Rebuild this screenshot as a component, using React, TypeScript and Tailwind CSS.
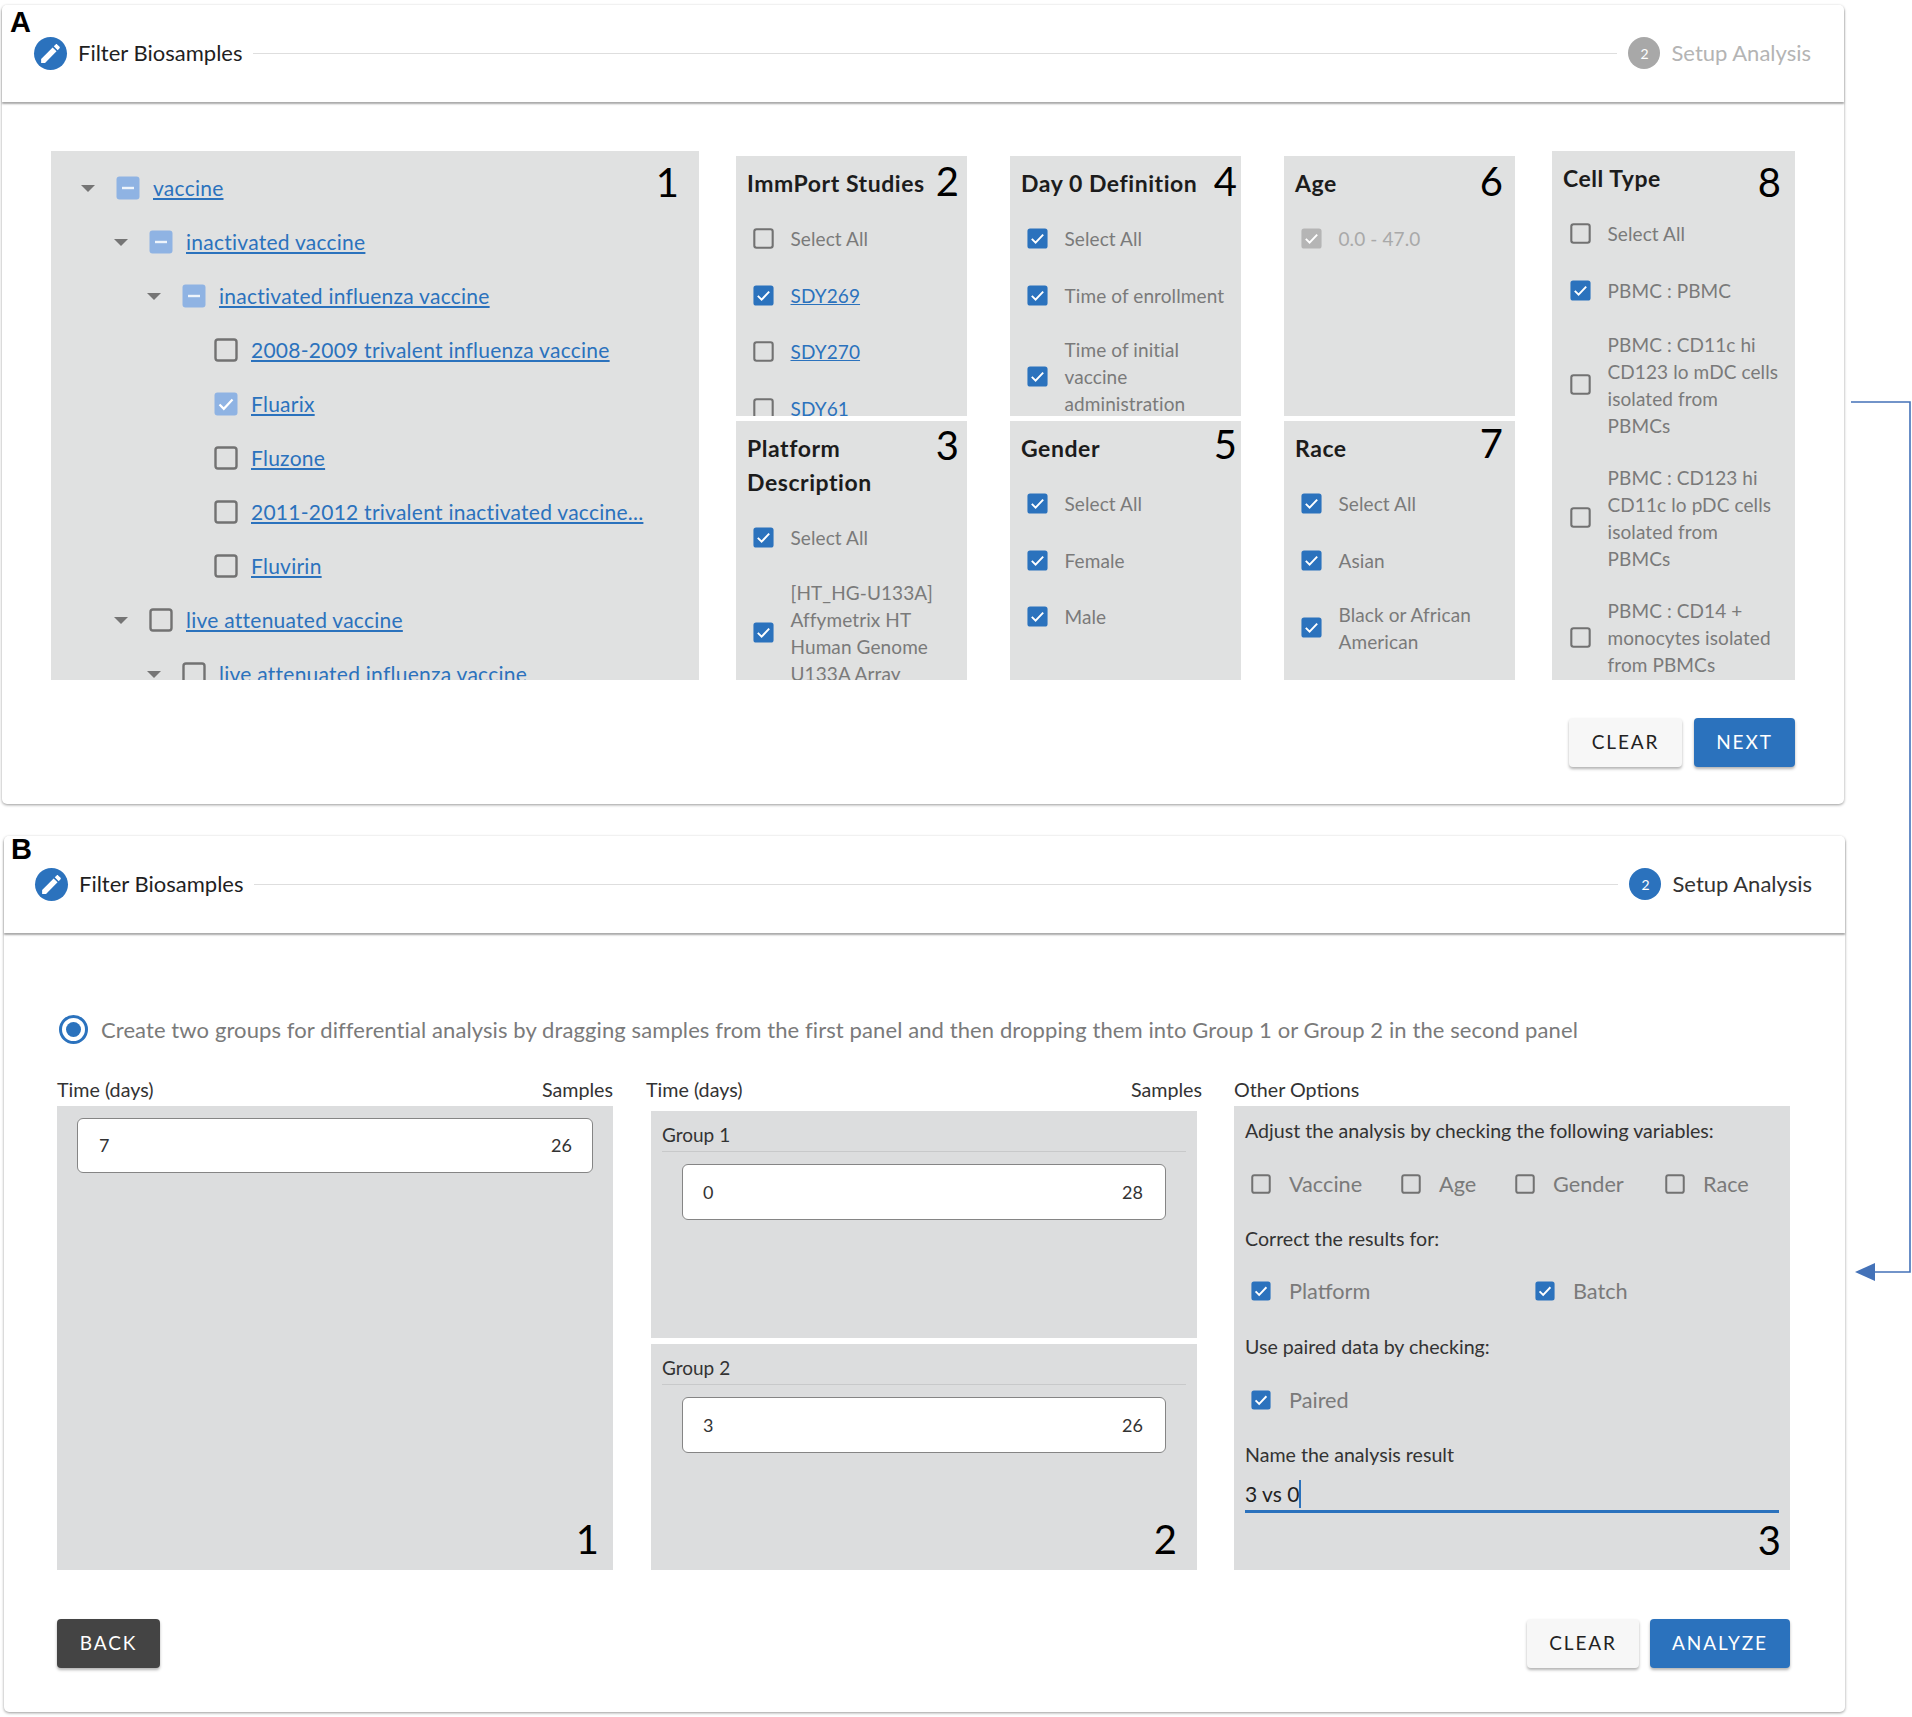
import React from "react";

const BLUE = "#2b72bd";

function Box({ state, size }: { state: "on" | "off" | "mixed" | "soft" | "disabled"; size: number }) {
  const fill = state === "on" ? BLUE : state === "mixed" || state === "soft" ? "#8fb3e3" : state === "disabled" ? "#b5b5b5" : "none";
  return (
    <svg width={size} height={size} viewBox="0 0 24 24" className="shrink-0">
      {state === "off" ? (
        <rect x="1.5" y="1.5" width="21" height="21" rx="2.5" fill="none" stroke="#727272" strokeWidth="2.4" />
      ) : (
        <rect x="0.5" y="0.5" width="23" height="23" rx="3" fill={fill} />
      )}
      {state === "mixed" && <rect x="6" y="10.8" width="12" height="2.4" fill="#fff" opacity="0.85" />}
      {(state === "on" || state === "soft" || state === "disabled") && (
        <path d="M5.5 12.5l4.3 4.3 8.7-9.3" fill="none" stroke="#fff" strokeWidth="2.2" />
      )}
    </svg>
  );
}

function Caret() {
  return (
    <svg width="14" height="7" viewBox="0 0 14 7" className="shrink-0 mr-[21px]">
      <polygon points="0,0 14,0 7,7" fill="#757575" />
    </svg>
  );
}

function Tree({ pad, label, state, arrow = true }: { pad: string; label: string; state: "off" | "mixed" | "soft"; arrow?: boolean }) {
  return (
    <div className={`flex h-[54px] shrink-0 items-center ${pad}`}>
      {arrow && <Caret />}
      <Box state={state} size={24} />
      <a className="ml-[13px] whitespace-nowrap text-[21px] tracking-[0.25px] text-[#2b72bd] underline">{label}</a>
    </div>
  );
}

function Item({ state, label, link, pad = "pl-[17px]", gray }: { state: "on" | "off" | "disabled"; label: string; link?: boolean; pad?: string; gray?: boolean }) {
  return (
    <div className={`flex min-h-[56.7px] shrink-0 items-center py-[12.5px] ${pad}`}>
      <Box state={state} size={21} />
      <span
        className={`ml-[16.5px] whitespace-pre-line text-[19px] leading-[27px] tracking-[0.1px] ${
          link ? "text-[#2b72bd] underline" : gray ? "text-[#a9a9a9]" : "text-[#7a7a7a]"
        }`}
      >
        {label}
      </span>
    </div>
  );
}

function Digit({ children, className }: { children: React.ReactNode; className: string }) {
  return <span className={`absolute text-[40px] leading-[48px] text-black ${className}`}>{children}</span>;
}

function Panel({ title, digit, digitClass, height, children }: { title: string; digit: string; digitClass: string; height: string; children: React.ReactNode }) {
  return (
    <div className={`relative overflow-hidden bg-[#e0e1e1] ${height}`}>
      <div className="whitespace-pre-line pb-[9.75px] pl-[11px] pt-[9.75px] text-[23px] font-bold leading-[34.5px] tracking-[0.55px] text-[#1c1c1c]">{title}</div>
      {children}
      <Digit className={digitClass}>{digit}</Digit>
    </div>
  );
}

function Pencil() {
  return (
    <span className="flex h-[33px] w-[33px] shrink-0 items-center justify-center rounded-full bg-[#2b72bd]">
      <svg width="25" height="25" viewBox="0 0 24 24" fill="#fff">
        <path d="M3 17.25V21h3.75L17.81 9.94l-3.75-3.75L3 17.25zM20.71 7.04c.39-.39.39-1.02 0-1.41l-2.34-2.34c-.39-.39-1.02-.39-1.41 0l-1.83 1.83 3.75 3.75 1.83-1.83z" />
      </svg>
    </span>
  );
}

function Header({ active, className }: { active: boolean; className: string }) {
  return (
    <div className={`flex items-start rounded-t-[5px] bg-white shadow-[0_2px_2px_rgba(0,0,0,0.34)] ${className}`}>
      <div className="flex h-[34px] w-full items-center">
        <Pencil />
        <span className="mb-[2px] ml-[11px] text-[22px] text-[#1f1f1f]">Filter Biosamples</span>
        <div className="mx-[11px] h-px flex-1 bg-[#dedede]" />
        <span className={`flex h-[32px] w-[32px] shrink-0 items-center justify-center rounded-full text-[14px] text-white ${active ? "bg-[#2b72bd]" : "bg-[#a8a8a8]"}`}>2</span>
        <span className={`mb-[2px] ml-[11px] text-[22px] ${active ? "text-[#333333]" : "text-[#b4b4b4]"}`}>Setup Analysis</span>
      </div>
    </div>
  );
}

function Btn({ children, className }: { children: React.ReactNode; className: string }) {
  return (
    <button className={`flex h-[49px] items-center justify-center rounded-[4px] text-[19px] tracking-[0.1em] shadow-[0_2px_3px_rgba(0,0,0,0.3)] ${className}`}>
      {children}
    </button>
  );
}

function Sample({ time, count, className }: { time: string; count: string; className: string }) {
  return (
    <div className={`flex items-center justify-between rounded-[6px] border border-[#858585] bg-white text-[18px] text-[#333333] ${className}`}>
      <span>{time}</span>
      <span>{count}</span>
    </div>
  );
}

function Opt({ state, label, className }: { state: "on" | "off"; label: string; className?: string }) {
  return (
    <div className={`flex items-center ${className ?? ""}`}>
      <Box state={state} size={20} />
      <span className="ml-[18px] text-[21.7px] text-[#7a7a7a]">{label}</span>
    </div>
  );
}

function ColLabel({ left, right }: { left: string; right?: string }) {
  return (
    <div className="flex h-[28px] items-start justify-between text-[19.7px] leading-[24px] text-[#333333]">
      <span>{left}</span>
      {right && <span>{right}</span>}
    </div>
  );
}

export default function App() {
  return (
    <div className="relative h-[1717px] w-[1912px] overflow-hidden bg-white pt-[5px] font-['Lato',sans-serif]">
      {/* Card A */}
      <section className="relative ml-[2px] h-[799px] w-[1842px] rounded-[5px] bg-white shadow-[0_1px_3px_rgba(0,0,0,0.4)]">
        <Header active={false} className="h-[97px] pl-[32px] pr-[33px] pt-[31px]" />
        <div className="flex pl-[49px] pt-[49px]">
          <div className="relative h-[529px] w-[648px] overflow-hidden bg-[#e0e1e1] pt-[10px]">
            <Tree pad="pl-[30px]" label="vaccine" state="mixed" />
            <Tree pad="pl-[63px]" label="inactivated vaccine" state="mixed" />
            <Tree pad="pl-[96px]" label="inactivated influenza vaccine" state="mixed" />
            <Tree pad="pl-[163px]" label="2008-2009 trivalent influenza vaccine" state="off" arrow={false} />
            <Tree pad="pl-[163px]" label="Fluarix" state="soft" arrow={false} />
            <Tree pad="pl-[163px]" label="Fluzone" state="off" arrow={false} />
            <Tree pad="pl-[163px]" label="2011-2012 trivalent inactivated vaccine..." state="off" arrow={false} />
            <Tree pad="pl-[163px]" label="Fluvirin" state="off" arrow={false} />
            <Tree pad="pl-[63px]" label="live attenuated vaccine" state="off" />
            <Tree pad="pl-[96px]" label="live attenuated influenza vaccine" state="off" />
            <Digit className="right-[20px] top-[7px]">1</Digit>
          </div>

          <div className="ml-[37px] flex h-[529px] w-[231px] flex-col gap-[5px] pt-[5px]">
            <Panel title="ImmPort Studies" digit="2" digitClass="right-[8px] top-[1px]" height="h-[260px]">
              <Item state="off" label="Select All" />
              <Item state="on" label="SDY269" link />
              <Item state="off" label="SDY270" link />
              <Item state="off" label="SDY61" link />
            </Panel>
            <Panel title={"Platform\nDescription"} digit="3" digitClass="right-[8px] top-[0px]" height="h-[259px]">
              <Item state="on" label="Select All" />
              <Item state="on" label={"[HT_HG-U133A]\nAffymetrix HT\nHuman Genome\nU133A Array"} />
            </Panel>
          </div>

          <div className="ml-[43px] flex h-[529px] w-[231px] flex-col gap-[5px] pt-[5px]">
            <Panel title="Day 0 Definition" digit="4" digitClass="right-[4px] top-[1px]" height="h-[260px]">
              <Item state="on" label="Select All" />
              <Item state="on" label="Time of enrollment" />
              <Item state="on" label={"Time of initial\nvaccine\nadministration"} />
            </Panel>
            <Panel title="Gender" digit="5" digitClass="right-[4px] top-[-1px]" height="h-[259px]">
              <Item state="on" label="Select All" />
              <Item state="on" label="Female" />
              <Item state="on" label="Male" />
            </Panel>
          </div>

          <div className="ml-[43px] flex h-[529px] w-[231px] flex-col gap-[5px] pt-[5px]">
            <Panel title="Age" digit="6" digitClass="right-[12px] top-[1px]" height="h-[260px]">
              <Item state="disabled" label="0.0 - 47.0" gray />
            </Panel>
            <Panel title="Race" digit="7" digitClass="right-[12px] top-[-2px]" height="h-[259px]">
              <Item state="on" label="Select All" />
              <Item state="on" label="Asian" />
              <Item state="on" label={"Black or African\nAmerican"} />
            </Panel>
          </div>

          <div className="relative ml-[37px] h-[529px] w-[243px] overflow-hidden bg-[#e0e1e1]">
            <div className="pb-[9.75px] pl-[11px] pt-[9.75px] text-[23px] font-bold leading-[34.5px] tracking-[0.55px] text-[#1c1c1c]">Cell Type</div>
            <Item state="off" label="Select All" pad="pl-[18px]" />
            <Item state="on" label="PBMC : PBMC" pad="pl-[18px]" />
            <Item state="off" label={"PBMC : CD11c hi\nCD123 lo mDC cells\nisolated from\nPBMCs"} pad="pl-[18px]" />
            <Item state="off" label={"PBMC : CD123 hi\nCD11c lo pDC cells\nisolated from\nPBMCs"} pad="pl-[18px]" />
            <Item state="off" label={"PBMC : CD14 +\nmonocytes isolated\nfrom PBMCs"} pad="pl-[18px]" />
            <Digit className="right-[14px] top-[7px]">8</Digit>
          </div>
        </div>
        <div className="mt-[38px] flex justify-end gap-[12px] pr-[49px]">
          <Btn className="w-[113px] bg-[#f7f7f7] text-[#222222]">CLEAR</Btn>
          <Btn className="w-[101px] bg-[#2b72bd] text-white">NEXT</Btn>
        </div>
        <span className="absolute left-[8px] top-[1px] font-['Liberation_Sans',sans-serif] text-[29px] font-bold leading-[32px] text-black">A</span>
      </section>

      {/* Card B */}
      <section className="relative ml-[4px] mt-[32px] h-[876px] w-[1841px] rounded-[5px] bg-white shadow-[0_1px_3px_rgba(0,0,0,0.4)]">
        <Header active className="h-[97px] pl-[31px] pr-[33px] pt-[31px]" />
        <div className="pl-[53px] pr-[55px]">
          <div className="flex items-center pt-[82px]">
            <span className="ml-[2px] flex h-[29px] w-[29px] items-center justify-center rounded-full border-[3px] border-[#2b72bd]">
              <span className="h-[15px] w-[15px] rounded-full bg-[#2b72bd]" />
            </span>
            <span className="ml-[13px] whitespace-nowrap text-[22px] leading-[29px] tracking-[0.1px] text-[#7a7a7a]">
              Create two groups for differential analysis by dragging samples from the first panel and then dropping them into Group 1 or Group 2 in the second panel
            </span>
          </div>

          <div className="mt-[34px] flex gap-[33px]">
            <div className="w-[556px] shrink-0">
              <ColLabel left="Time (days)" right="Samples" />
              <div className="relative h-[464px] bg-[#dcddde] px-[20px] pt-[12px]">
                <Sample time="7" count="26" className="h-[55px] pl-[21px] pr-[20px]" />
                <Digit className="bottom-[7px] right-[14px]">1</Digit>
              </div>
            </div>

            <div className="w-[556px] shrink-0">
              <ColLabel left="Time (days)" right="Samples" />
              <div className="relative mx-[5px] mt-[5px] flex h-[459px] flex-col gap-[6px]">
                {[
                  { name: "Group 1", time: "0", count: "28", h: "h-[227px]" },
                  { name: "Group 2", time: "3", count: "26", h: "h-[226px]" },
                ].map((g) => (
                  <div key={g.name} className={`bg-[#dcddde] px-[11px] ${g.h}`}>
                    <div className="flex h-[41px] items-end border-b border-[#c8c9ca] pb-[4px] text-[19px] leading-[24px] text-[#333333]">{g.name}</div>
                    <Sample time={g.time} count={g.count} className="mx-[20px] mt-[12px] h-[56px] pl-[20px] pr-[22px]" />
                  </div>
                ))}
                <Digit className="bottom-[7px] right-[20px]">2</Digit>
              </div>
            </div>

            <div className="ml-[-1px] w-[556px] shrink-0">
              <ColLabel left="Other Options" />
              <div className="relative h-[464px] bg-[#dcddde] px-[11px] pt-[13px] text-[19.6px] leading-[24px] text-[#333333]">
                <div>Adjust the analysis by checking the following variables:</div>
                <div className="ml-[6px] mt-[21px] flex h-[40px]">
                  <Opt state="off" label="Vaccine" className="w-[150px]" />
                  <Opt state="off" label="Age" className="w-[114px]" />
                  <Opt state="off" label="Gender" className="w-[150px]" />
                  <Opt state="off" label="Race" />
                </div>
                <div className="mt-[23px]">Correct the results for:</div>
                <div className="ml-[6px] mt-[20px] flex h-[40px]">
                  <Opt state="on" label="Platform" className="w-[284px]" />
                  <Opt state="on" label="Batch" />
                </div>
                <div className="mt-[24px]">Use paired data by checking:</div>
                <div className="ml-[6px] mt-[21px] flex h-[40px]">
                  <Opt state="on" label="Paired" />
                </div>
                <div className="mt-[23px]">Name the analysis result</div>
                <div className="mt-[12px] flex h-[34px] items-center border-b-[3px] border-[#2b72bd] pb-[2px] text-[21px] text-[#222222]">
                  <span className="border-r-2 border-[#2b72bd] leading-[28px]">3 vs 0</span>
                </div>
                <Digit className="bottom-[6px] right-[9px]">3</Digit>
              </div>
            </div>
          </div>

          <div className="mt-[49px] flex justify-between">
            <Btn className="w-[103px] bg-[#444444] text-white">BACK</Btn>
            <div className="flex gap-[11px]">
              <Btn className="w-[112px] bg-[#f7f7f7] text-[#222222]">CLEAR</Btn>
              <Btn className="w-[140px] bg-[#2b72bd] text-white">ANALYZE</Btn>
            </div>
          </div>
        </div>
        <span className="absolute left-[7px] top-[-3px] font-['Liberation_Sans',sans-serif] text-[29px] font-bold leading-[32px] text-black">B</span>
      </section>

      {/* connector arrow between the two cards */}
      <svg className="absolute left-[1840px] top-[390px]" width="72" height="900" viewBox="0 0 72 900">
        <path d="M11 12H70V882H30" fill="none" stroke="#4472b8" strokeWidth="1.6" />
        <polygon points="15,882 35,873 35,891" fill="#4472b8" />
      </svg>
    </div>
  );
}
